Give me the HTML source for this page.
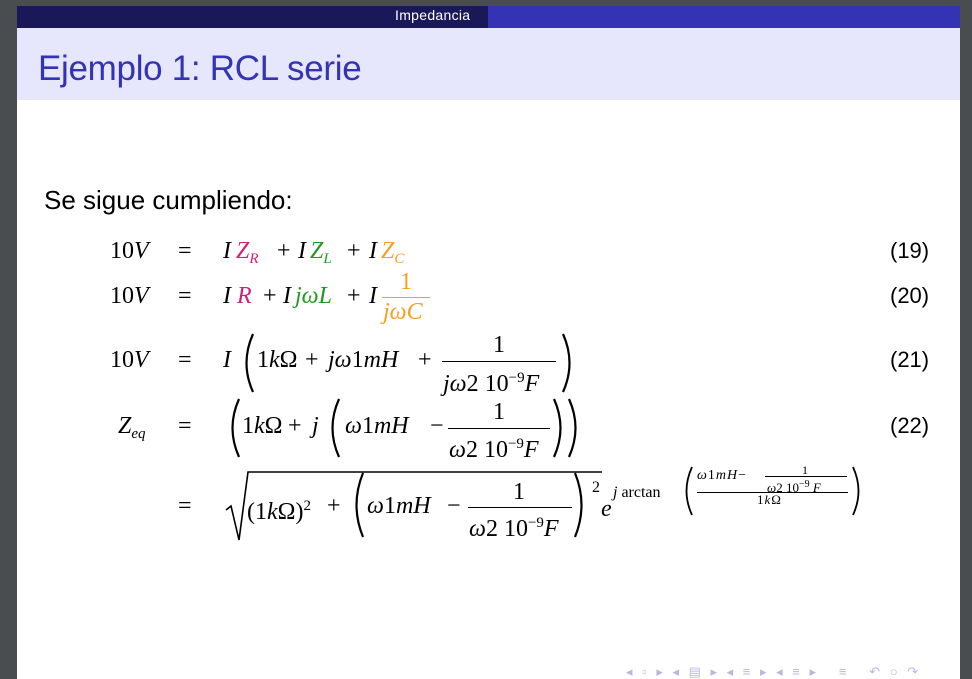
<!DOCTYPE html>
<html><head><meta charset="utf-8"><style>
html,body{margin:0;width:972px;height:679px;overflow:hidden}
body{background:#4a4d50;position:relative;font-family:"Liberation Serif",serif}
#slide{position:absolute;left:17px;top:6px;width:943px;height:673px;background:#fff}
.hd1{position:absolute;left:17px;top:6px;width:471px;height:22px;background:#1a1858}
.hd2{position:absolute;left:488px;top:6px;width:472px;height:22px;background:#3333b3}
.hdt{position:absolute;left:395px;top:8px;color:#fff;font:14px/14px "Liberation Sans",sans-serif;letter-spacing:0.3px}
.tb{position:absolute;left:17px;top:28px;width:943px;height:72px;background:#e6e6fc}
.tt{position:absolute;left:38px;top:50px;color:#3333b3;font:35px/38px "Liberation Sans",sans-serif;letter-spacing:-0.3px}
.t{position:absolute;white-space:nowrap;font-size:24px;line-height:24px;color:#000}
.i{font-style:italic}
.s{font-family:"Liberation Sans",sans-serif;font-size:22px}
.m{color:#d0207a}.g{color:#1f9a1f}.o{color:#f5a020}
sub{font-size:15px;vertical-align:-5px}
sup{font-size:15px;vertical-align:9px}
.ln{position:absolute;height:1px;background:#000}
svg{position:absolute;overflow:visible}
</style></head><body>
<div id="slide"></div>
<div class="hd1"></div><div class="hd2"></div>
<div class="hdt">Impedancia</div>
<div class="tb"></div>
<div class="tt">Ejemplo 1: RCL serie</div>
<div class="t s" style="left:44px;top:186px;font-size:26px;line-height:28px">Se sigue cumpliendo:</div>

<!-- row 19 -->
<div class="t" style="left:110px;top:239px">10<span class="i">V</span></div>
<div class="t" style="left:178px;top:239px">=</div>
<div class="t i" style="left:223px;top:239px">I</div>
<div class="t i m" style="left:236px;top:239px">Z<sub>R</sub></div>
<div class="t" style="left:277px;top:239px">+</div>
<div class="t i" style="left:298px;top:239px">I</div>
<div class="t i g" style="left:310px;top:239px">Z<sub>L</sub></div>
<div class="t" style="left:347px;top:239px">+</div>
<div class="t i" style="left:369px;top:239px">I</div>
<div class="t i o" style="left:381px;top:239px">Z<sub>C</sub></div>
<div class="t s" style="left:890px;top:239px">(19)</div>

<!-- row 20 -->
<div class="t" style="left:110px;top:284px">10<span class="i">V</span></div>
<div class="t" style="left:178px;top:284px">=</div>
<div class="t i" style="left:223px;top:284px">I</div>
<div class="t i m" style="left:237px;top:284px">R</div>
<div class="t" style="left:263px;top:284px">+</div>
<div class="t i" style="left:283px;top:284px">I</div>
<div class="t i g" style="left:295px;top:284px">jωL</div>
<div class="t" style="left:347px;top:284px">+</div>
<div class="t i" style="left:369px;top:284px">I</div>
<div class="t o" style="left:400px;top:270px">1</div>
<div class="ln" style="left:382px;top:297px;width:48px;background:#f5a020"></div>
<div class="t i o" style="left:383px;top:300px">jωC</div>
<div class="t s" style="left:890px;top:284px">(20)</div>

<!-- row 21 -->
<div class="t" style="left:110px;top:348px">10<span class="i">V</span></div>
<div class="t" style="left:178px;top:348px">=</div>
<div class="t i" style="left:223px;top:348px">I</div>
<svg style="left:240px;top:333px" width="14" height="60"><path d="M13 1 Q0 30 13 59" fill="none" stroke="#000" stroke-width="2.2"/></svg>
<div class="t" style="left:257px;top:348px">1<span class="i">k</span>Ω</div>
<div class="t" style="left:305px;top:348px">+</div>
<div class="t" style="left:328px;top:348px"><span class="i">jω</span>1<span class="i">mH</span></div>
<div class="t" style="left:418px;top:348px">+</div>
<div class="t" style="left:493px;top:333px">1</div>
<div class="ln" style="left:442px;top:361px;width:114px"></div>
<div class="t" style="left:443px;top:366px"><span class="i">jω</span>2 10<sup>−9</sup><span class="i">F</span></div>
<svg style="left:562px;top:333px" width="14" height="60"><path d="M1 1 Q14 30 1 59" fill="none" stroke="#000" stroke-width="2.2"/></svg>
<div class="t s" style="left:890px;top:348px">(21)</div>

<!-- row 22 -->
<div class="t i" style="left:118px;top:414px">Z<sub>eq</sub></div>
<div class="t" style="left:178px;top:414px">=</div>
<svg style="left:226px;top:398px" width="14" height="60"><path d="M13 1 Q0 30 13 59" fill="none" stroke="#000" stroke-width="2.2"/></svg>
<div class="t" style="left:242px;top:414px">1<span class="i">k</span>Ω</div>
<div class="t" style="left:288px;top:414px">+</div>
<div class="t i" style="left:312px;top:414px">j</div>
<svg style="left:326px;top:398px" width="14" height="60"><path d="M13 1 Q0 30 13 59" fill="none" stroke="#000" stroke-width="2.2"/></svg>
<div class="t" style="left:345px;top:414px"><span class="i">ω</span>1<span class="i">mH</span></div>
<div class="t" style="left:430px;top:414px">−</div>
<div class="t" style="left:493px;top:400px">1</div>
<div class="ln" style="left:448px;top:428px;width:102px"></div>
<div class="t" style="left:449px;top:432px"><span class="i">ω</span>2 10<sup>−9</sup><span class="i">F</span></div>
<svg style="left:553px;top:398px" width="14" height="60"><path d="M1 1 Q14 30 1 59" fill="none" stroke="#000" stroke-width="2.2"/></svg>
<svg style="left:568px;top:398px" width="14" height="60"><path d="M1 1 Q14 30 1 59" fill="none" stroke="#000" stroke-width="2.2"/></svg>
<div class="t s" style="left:890px;top:414px">(22)</div>

<!-- row 23 -->
<div class="t" style="left:178px;top:494px">=</div>
<svg style="left:226px;top:470px" width="380" height="72"><path d="M0 40 L5 36 L13 70 L22 2 L376 2" fill="none" stroke="#000" stroke-width="1.6"/></svg>
<div class="t" style="left:247px;top:494px">(1<span class="i">k</span>Ω)<sup>2</sup></div>
<div class="t" style="left:327px;top:494px">+</div>
<svg style="left:350px;top:472px" width="14" height="66"><path d="M13 1 Q0 33 13 65" fill="none" stroke="#000" stroke-width="2.2"/></svg>
<div class="t" style="left:367px;top:494px"><span class="i">ω</span>1<span class="i">mH</span></div>
<div class="t" style="left:447px;top:494px">−</div>
<div class="t" style="left:513px;top:480px">1</div>
<div class="ln" style="left:468px;top:507px;width:104px"></div>
<div class="t" style="left:469px;top:511px"><span class="i">ω</span>2 10<sup>−9</sup><span class="i">F</span></div>
<svg style="left:574px;top:472px" width="14" height="66"><path d="M1 1 Q14 33 1 65" fill="none" stroke="#000" stroke-width="2.2"/></svg>
<div class="t" style="left:592px;top:476px;font-size:16px">2</div>
<div class="t i" style="left:601px;top:497px">e</div>
<div class="t" style="left:613px;top:481px;font-size:16px"><span class="i">j</span> arctan</div>
<svg style="left:681px;top:466px" width="12" height="50"><path d="M11 1 Q0 25 11 49" fill="none" stroke="#000" stroke-width="1.8"/></svg>
<div class="t" style="left:697px;top:469px;font-size:14px;line-height:14px;letter-spacing:1px"><i>ω</i>1<i>mH</i>−</div>
<div class="t" style="left:802px;top:464px;font-size:12px;line-height:12px">1</div>
<div class="ln" style="left:765px;top:476px;width:82px"></div>
<div class="t" style="left:767px;top:478px;font-size:13px;line-height:13px"><i>ω</i>2 10<sup style="font-size:10px;vertical-align:5px">−9</sup> <i>F</i></div>
<div class="ln" style="left:697px;top:492px;width:151px"></div>
<div class="t" style="left:757px;top:493px;font-size:13px;line-height:13px;letter-spacing:1px">1<i>k</i>Ω</div>
<svg style="left:852px;top:466px" width="12" height="50"><path d="M1 1 Q12 25 1 49" fill="none" stroke="#000" stroke-width="1.8"/></svg>

<!-- nav -->
<div class="t s" style="left:626px;top:664px;font-size:13px;line-height:15px;color:#b8b8dc;letter-spacing:3px">◂ ▫ ▸ ◂ ▤ ▸ ◂ ≡ ▸ ◂ ≡ ▸ &nbsp; ≡ &nbsp; ↶ ○ ↷</div>
</body></html>
